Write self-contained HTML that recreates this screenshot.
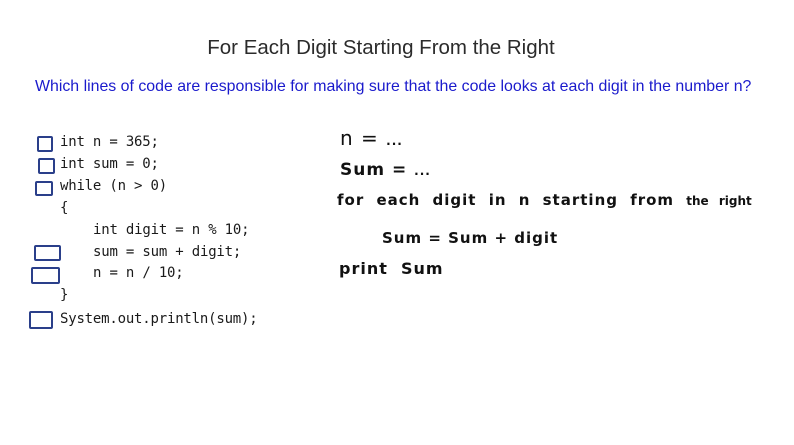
<!DOCTYPE html>
<html><head><meta charset="utf-8"><style>
body{margin:0;width:794px;height:445px;background:#fff;position:relative;overflow:hidden;font-family:"Liberation Sans",sans-serif}
.a{position:absolute;white-space:pre}
.t{left:0;width:762px;text-align:center;top:36px;font-size:20.5px;color:#2b2b2b}
.q{left:35px;top:78px;font-size:15.9px;color:#1a1acc}
.c{font-family:"DejaVu Sans Mono","Liberation Mono",monospace;font-size:14px;color:#1a1a1a;left:60px;letter-spacing:-0.2px}
.b{position:absolute;border:2px solid #2a3f8a;border-radius:2px}
.h{font-family:"DejaVu Sans","Liberation Sans",sans-serif;color:#111;letter-spacing:1px}
</style></head><body>
<div class="a t">For Each Digit Starting From the Right</div>
<div class="a q">Which lines of code are responsible for making sure that the code looks at each digit in the number n?</div>

<div class="b" style="left:37px;top:136px;width:12px;height:12px"></div>
<div class="b" style="left:38px;top:158px;width:13px;height:12px"></div>
<div class="b" style="left:35px;top:181px;width:14px;height:11px"></div>
<div class="b" style="left:34px;top:245px;width:23px;height:12px"></div>
<div class="b" style="left:31px;top:267px;width:25px;height:13px"></div>
<div class="b" style="left:29px;top:311px;width:20px;height:14px"></div>

<div class="a c" style="top:134px">int n = 365;</div>
<div class="a c" style="top:156px">int sum = 0;</div>
<div class="a c" style="top:178px">while (n &gt; 0)</div>
<div class="a c" style="top:200px">{</div>
<div class="a c" style="top:222px;left:93px">int digit = n % 10;</div>
<div class="a c" style="top:244px;left:93px">sum = sum + digit;</div>
<div class="a c" style="top:265px;left:93px">n = n / 10;</div>
<div class="a c" style="top:287px">}</div>
<div class="a c" style="top:311px">System.out.println(sum);</div>

<div class="a h" style="left:340px;top:126px;font-size:20px">n = <span style="font-size:12px;font-weight:bold">...</span></div>
<div class="a h" style="left:340px;top:160px;font-size:17px;font-weight:bold">Sum = <span style="font-size:12px">...</span></div>
<div class="a h" style="left:337px;top:191px;font-size:15px;word-spacing:6px;font-weight:bold">for each digit in n starting from <span style="font-size:12px;letter-spacing:0">the right</span></div>
<div class="a h" style="left:382px;top:229px;font-size:15px;font-weight:bold">Sum = Sum + digit</div>
<div class="a h" style="left:339px;top:259px;font-size:16px;font-weight:bold">print  Sum</div>
</body></html>
